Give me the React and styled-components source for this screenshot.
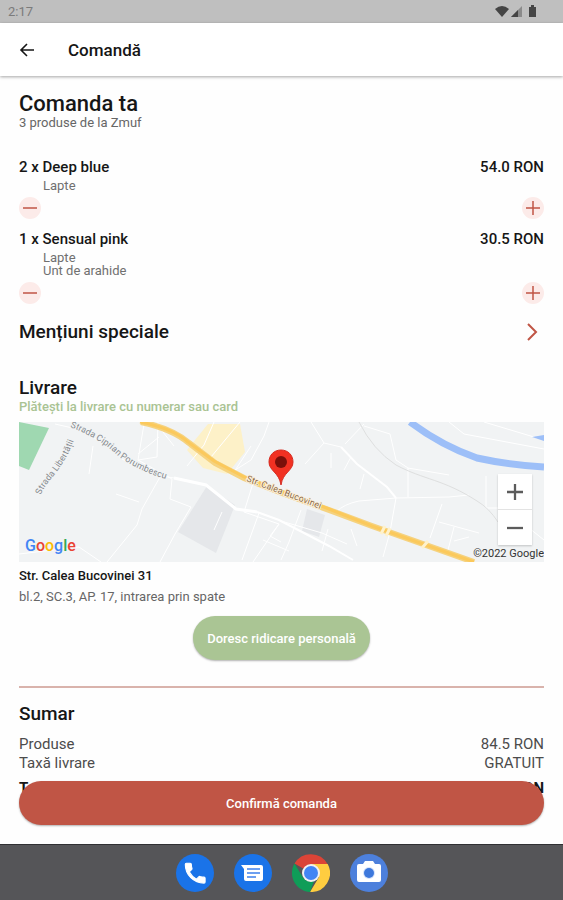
import React from "react";
import styled, { createGlobalStyle } from "styled-components";

const GlobalStyle = createGlobalStyle`
  *, *::before, *::after { box-sizing: border-box; }
  body { margin: 0; background: #fff; }
  h1, h2, h3, p, ul, dl, dd, dt { margin: 0; padding: 0; }
  button { font-family: inherit; border: 0; padding: 0; cursor: pointer; }
`;

const Screen = styled.div`
  display: flex;
  flex-direction: column;
  height: 100vh;
  color: #161616;
  background: #fefefe;
  font-family: Roboto, sans-serif;
`;

const StatusBar = styled.div`
  display: flex;
  align-items: center;
  justify-content: space-between;
  flex: none;
  height: 23px;
  padding: 0 25px 0 8px;
  background: #bfbfbf;
  color: #7b7b7b;
  font-size: 13px;
`;

const StatusIcons = styled.svg`
  width: 43px;
  height: 14px;
`;

const AppBar = styled.header`
  display: flex;
  align-items: center;
  flex: none;
  gap: 33px;
  height: 53px;
  padding: 0 19px;
  background: #fff;
  box-shadow: 0 1px 3px rgba(0, 0, 0, 0.35);
  z-index: 1;
`;

const BackButton = styled.button`
  display: flex;
  width: 16px;
  height: 16px;
  background: none;
  color: #161616;
`;

const AppBarTitle = styled.h1`
  font-size: 17px;
  font-weight: 500;
`;

const Body = styled.div`
  position: relative;
  flex: 1;
  min-height: 0;
`;

const Scroller = styled.main`
  height: 100%;
  overflow-y: auto;
  scrollbar-width: none;
  padding: 16px 19px 64px;
`;

const Title = styled.h2`
  font-size: 22px;
  font-weight: 500;
  line-height: 24px;
`;

const Heading = styled.h2`
  font-size: 19px;
  font-weight: 500;
  line-height: 24px;
`;

const Caption = styled.p`
  font-size: 13px;
  line-height: 14px;
  font-weight: ${(p) => (p.$accent ? 500 : 400)};
  color: ${(p) => (p.$accent ? "#a9c393" : "#666")};
`;

const Items = styled.ul`
  display: flex;
  flex-direction: column;
  gap: 10px;
  margin-top: 27px;
  list-style: none;
`;

const ItemName = styled.div`
  display: flex;
  justify-content: space-between;
  font-size: 15px;
  font-weight: 500;
  line-height: 20px;
`;

const Extras = styled.div`
  margin: 2px 0 5px 24px;
  color: #707070;
  font-size: 13px;
  line-height: 13px;
`;

const Stepper = styled.div`
  display: flex;
  justify-content: space-between;
`;

const RoundButton = styled.button`
  display: flex;
  align-items: center;
  justify-content: center;
  width: 22px;
  height: 22px;
  border-radius: 50%;
  background: #fcebe9;
  color: #c05545;
`;

const NotesButton = styled.button`
  display: flex;
  align-items: center;
  justify-content: space-between;
  width: 100%;
  margin-top: 16px;
  padding-right: 6px;
  background: none;
  color: #161616;
  text-align: left;
  font-size: 19px;
  font-weight: 500;
  line-height: 24px;
`;

const Delivery = styled.section`
  display: flex;
  flex-direction: column;
  margin-top: 32px;
`;

const MapFrame = styled.div`
  position: relative;
  height: 140px;
  margin-top: 8px;
  overflow: hidden;
  background: #f1f3f4;
`;

const MapDrawing = styled.svg`
  display: block;
  width: 100%;
  height: 100%;
`;

const MapLogo = styled.a`
  position: absolute;
  left: 6px;
  bottom: 6px;
  font-size: 16px;
  font-weight: 500;
  line-height: 20px;
  text-decoration: none;
`;

const LogoLetter = styled.span`
  color: ${(p) => p.$color};
`;

const MapCredit = styled.span`
  position: absolute;
  right: 0;
  bottom: 1px;
  color: #333;
  font-size: 11px;
  line-height: 14px;
`;

const MapZoom = styled.div`
  position: absolute;
  right: 12px;
  bottom: 17px;
  display: flex;
  flex-direction: column;
  gap: 1px;
  width: 34px;
  background: #e3e3e3;
  box-shadow: 0 1px 2px rgba(0, 0, 0, 0.2);
`;

const MapZoomButton = styled.button`
  display: flex;
  align-items: center;
  justify-content: center;
  height: 35px;
  background: #fff;
  color: #5c5c5c;
`;

const Address = styled.p`
  margin-top: 6px;
  font-size: 13px;
  font-weight: 500;
  line-height: 16px;
`;

const AddressDetail = styled.p`
  margin-top: 5px;
  color: #666;
  font-size: 13px;
  line-height: 16px;
`;

const PickupButton = styled.button`
  align-self: center;
  height: 44px;
  margin-top: 11px;
  padding: 0 14px;
  border-radius: 22px;
  background: #aac594;
  box-shadow: 0 1px 2px rgba(0, 0, 0, 0.3);
  color: #fff;
  font-size: 13px;
  font-weight: 500;
`;

const Summary = styled.section`
  margin-top: 26px;
  padding-top: 14px;
  border-top: 2px solid #d9b3ac;
`;

const Totals = styled.dl`
  margin-top: 9px;
`;

const TotalRow = styled.div`
  display: flex;
  justify-content: space-between;
  margin-top: ${(p) => (p.$strong ? "6px" : "0")};
  color: ${(p) => (p.$strong ? "#161616" : "#4c4c4c")};
  font-size: 15px;
  font-weight: ${(p) => (p.$strong ? 700 : 400)};
  line-height: 19px;
`;

const ConfirmButton = styled.button`
  position: absolute;
  right: 19px;
  bottom: 19px;
  left: 19px;
  height: 44px;
  border-radius: 22px;
  background: #c05545;
  box-shadow: 0 1px 2px rgba(0, 0, 0, 0.3);
  color: #fff;
  font-size: 13px;
  font-weight: 500;
`;

const Dock = styled.nav`
  display: flex;
  align-items: center;
  justify-content: center;
  flex: none;
  gap: 20px;
  height: 56px;
  border-top: 1px solid #303033;
  background: #555558;
`;

const DockButton = styled.button`
  display: flex;
  background: none;
`;

const items = [
  { name: "2 x Deep blue", price: "54.0 RON", extras: ["Lapte"] },
  { name: "1 x Sensual pink", price: "30.5 RON", extras: ["Lapte", "Unt de arahide"] },
];

const logo = [
  ["G", "#4285f4"],
  ["o", "#ea4335"],
  ["o", "#fbbc05"],
  ["g", "#4285f4"],
  ["l", "#34a853"],
  ["e", "#ea4335"],
];

const Sign = ({ plus, size = 14, weight = 1.5 }) => (
  <svg width={size} height={size} viewBox="0 0 14 14" stroke="currentColor" strokeWidth={weight} aria-hidden="true">
    <path d={plus ? "M0 7H14M7 0V14" : "M0 7H14"} />
  </svg>
);

const StreetMap = () => (
  <MapDrawing viewBox="0 0 525 140" preserveAspectRatio="xMidYMid slice" role="img" aria-label="Hartă">
    <path d="M0 0L30 6L10 48L0 44Z" fill="#9fd8b1" />
    <path d="M189 2H221L226 30L208 52L184 46L168 28Z" fill="#fdf1c8" />
    <path d="M188 64L216 83L209 101L197 131L159 110Z" fill="#e5e7ea" />
    <path d="M288 87L306 93L300 115L283 109Z" fill="#e5e7ea" />
    <g fill="none" stroke="#fff" strokeWidth="2">
      <path d="M36 2L58 7Q86 20 100 35Q125 53 155 56" strokeWidth="1" />
      <path d="M155 56L187 63L217 87L238 90" strokeWidth="3" />
      <path d="M238 90L260 98L310 124L334 138" strokeWidth="2" />
      <path d="M139 0L138 35L119 38M125 2L119 38L153 57L151 77L172 85L156 112L141 140M203 90L195 108M141 55L123 87L118 103L88 140M97 72L120 80M74 24L70 52M0 132L60 125L82 140" strokeWidth="1" />
      <path d="M195 0L185 23L168 44M221 0L192 35M140 15L119 32M140 5L155 24M232 24L215 50M250 0L245 14L232 38L210 52M235 58L225 90L260 102L234 140M240 91L223 138M244 118L270 129M260 102L251 114L262 120" strokeWidth="1" />
      <path d="M292 0L305 21L322 25L338 42L368 65L377 76L430 75L450 73M305 21L286 42M326 22L345 2M377 76L371 110L364 135M377 76L340 79Q325 82 317 90M282 88L270 120L262 138M262 99L303 111L328 122M309 107L303 129M332 107L338 124" strokeWidth="1" />
      <path d="M322 25L338 42L368 65L377 76" strokeWidth="2" />
      <path d="M345 4L371 12L377 38L389 46L430 53M389 46V75M423 82L411 116M420 100L460 111M435 105L429 128M467 54V86H485M430 0L445 12L525 27M465 0L525 18M510 106L525 118M450 115L435 119M312 31V46M332 35L325 48M345 52L341 67" strokeWidth="1" />
    </g>
    <path d="M340 0Q354 28 377 43C405 58 424 57 458 79Q470 86 479 100" fill="none" stroke="#dedfdf" />
    <path d="M391 0Q423 24 458 36Q490 43 525 45" fill="none" stroke="#9dbff8" strokeWidth="7" />
    <path d="M513 15L525 13V19Z" fill="#9dbff8" />
    <path d="M122 0Q154 7 170 21L196 41L225 56L263 71L310 88L353 104L404 122L455 140" fill="none" stroke="#f5d27f" strokeWidth="6" />
    <path d="M121 0Q153 6 169 20L195 39L225 55L310 87L353 104L404 122L455 140" fill="none" stroke="#fbc95c" strokeWidth="3" />
    <path d="M366 104L362 112M371 106L367 114M409 119L403 126" stroke="#fff2cc" strokeWidth="3" />
    <path id="ciprian" d="M51 5Q84 18 100 35Q128 54 160 60" fill="none" />
    <path id="libertatii" d="M22 73C26 58 44 52 58 10" fill="none" />
    <path id="calea" d="M227 59L264 73L320 94" fill="none" />
    <g fill="#85898d" fontSize="10" stroke="#f1f3f4" strokeWidth="2" paintOrder="stroke">
      <text fontSize="9"><textPath href="#ciprian">Strada Ciprian Porumbescu</textPath></text>
      <text fontSize="9"><textPath href="#libertatii">Strada Libertății</textPath></text>
      <text fontSize="9" fill="#8b6846" stroke="#faefda"><textPath href="#calea">Str. Calea Bucovinei</textPath></text>
    </g>
    <path d="M262 28C269 28 274 33 274 40C274 49 264 50 262 63C260 50 250 49 250 40C250 33 255 28 262 28Z" fill="#f13122" stroke="#d62b20" strokeWidth="1" />
    <circle cx="262" cy="40" r="6" fill="#7a100a" />
  </MapDrawing>
);

const apps = [
  {
    name: "Telefon",
    art: (
      <>
        <circle cx="19" cy="19" r="19" fill="#1a73e8" />
        <path transform="translate(6 6) scale(1.1)" d="M6.6 10.8c1.5 2.8 3.8 5.1 6.6 6.6l2.2-2.2c.3-.3.7-.4 1-.2 1.1.4 2.3.6 3.6.6.6 0 1 .4 1 1V20c0 .6-.4 1-1 1C10.600 21 3 13.400 3 4c0-.6.4-1 1-1h3.500c.6 0 1 .4 1 1 0 1.200.2 2.400.6 3.600.1.4 0 .7-.2 1z" fill="#fff" stroke="#fff" />
      </>
    ),
  },
  {
    name: "Mesaje",
    art: (
      <>
        <circle cx="19" cy="19" r="19" fill="#1a73e8" />
        <path d="M7 11H27Q29 11 29 13V25Q29 27 27 27H12Q10 27 10 25V15Z" fill="#fff" />
        <path d="M13 15H26M13 19H26M13 23H22" stroke="#6d9ff0" strokeWidth="2" />
      </>
    ),
  },
  {
    name: "Chrome",
    art: (
      <>
        <path d="M19 19L2.500 9.500A19 19 0 0 1 35.500 10H19Z" fill="#db4437" />
        <path d="M19 10H35.700A19 19 0 0 1 18 38L27 23Z" fill="#ffcd40" />
        <path d="M2.500 9.500L11 23.500Q15 29 22 27L18 38A19 19 0 0 1 2.500 9.500Z" fill="#0f9d58" />
        <circle cx="19" cy="19" r="9" fill="#f1f1f1" />
        <circle cx="19" cy="19" r="7" fill="#4285f4" />
      </>
    ),
  },
  {
    name: "Cameră",
    art: (
      <>
        <circle cx="19" cy="19" r="19" fill="#4d80dc" />
        <path d="M9 10H13L15 7H23L25 10H29Q31 10 31 12V26Q31 28 29 28H9Q7 28 7 26V12Q7 10 9 10Z" fill="#fff" />
        <circle cx="19" cy="19" r="6" fill="#d5e3fb" />
        <circle cx="19" cy="19" r="5" fill="#3d78dc" />
      </>
    ),
  },
];

export default function App() {
  return (
    <Screen>
      <GlobalStyle />
      <StatusBar>
        <span>2:17</span>
        <StatusIcons viewBox="0 0 43 14" aria-hidden="true">
          <path d="M0 4Q7 -2 14 4L7 12Z" fill="#454545" />
          <path d="M16 12L27 1V12Z" fill="#8b8b8b" />
          <path d="M16 12L23 5V12Z" fill="#454545" />
          <path d="M34 2H36V0H39V2H41V12H34Z" fill="#454545" />
        </StatusIcons>
      </StatusBar>
      <AppBar>
        <BackButton aria-label="Înapoi">
          <svg width="16" height="16" viewBox="0 0 16 16" fill="none" stroke="currentColor" strokeWidth="1.6" aria-hidden="true">
            <path d="M15 8H2M8 2L2 8L8 14" />
          </svg>
        </BackButton>
        <AppBarTitle>Comandă</AppBarTitle>
      </AppBar>
      <Body>
        <Scroller>
          <Title>Comanda ta</Title>
          <Caption>3 produse de la Zmuf</Caption>
          <Items>
            {items.map((item) => (
              <li key={item.name}>
                <ItemName>
                  <span>{item.name}</span>
                  <span>{item.price}</span>
                </ItemName>
                <Extras>
                  {item.extras.map((extra) => (
                    <p key={extra}>{extra}</p>
                  ))}
                </Extras>
                <Stepper>
                  <RoundButton aria-label="Scade cantitatea">
                    <Sign />
                  </RoundButton>
                  <RoundButton aria-label="Crește cantitatea">
                    <Sign plus />
                  </RoundButton>
                </Stepper>
              </li>
            ))}
          </Items>
          <NotesButton>
            Mențiuni speciale
            <svg width="11" height="20" viewBox="0 0 11 20" fill="none" stroke="#c05545" strokeWidth="2" aria-hidden="true">
              <path d="M1 2L9 10L1 18" />
            </svg>
          </NotesButton>
          <Delivery>
            <Heading>Livrare</Heading>
            <Caption $accent>Plătești la livrare cu numerar sau card</Caption>
            <MapFrame>
              <StreetMap />
              <MapLogo href="#harta" aria-label="Google">
                {logo.map(([letter, color], i) => (
                  <LogoLetter key={i} $color={color}>{letter}</LogoLetter>
                ))}
              </MapLogo>
              <MapCredit>©2022 Google</MapCredit>
              <MapZoom>
                <MapZoomButton aria-label="Mărește">
                  <Sign plus size={16} weight={2} />
                </MapZoomButton>
                <MapZoomButton aria-label="Micșorează">
                  <Sign size={16} weight={2} />
                </MapZoomButton>
              </MapZoom>
            </MapFrame>
            <Address>Str. Calea Bucovinei 31</Address>
            <AddressDetail>bl.2, SC.3, AP. 17, intrarea prin spate</AddressDetail>
            <PickupButton>Doresc ridicare personală</PickupButton>
          </Delivery>
          <Summary>
            <Heading>Sumar</Heading>
            <Totals>
              <TotalRow>
                <dt>Produse</dt>
                <dd>84.5 RON</dd>
              </TotalRow>
              <TotalRow>
                <dt>Taxă livrare</dt>
                <dd>GRATUIT</dd>
              </TotalRow>
              <TotalRow $strong>
                <dt>Total</dt>
                <dd>84.5 RON</dd>
              </TotalRow>
            </Totals>
          </Summary>
        </Scroller>
        <ConfirmButton>Confirmă comanda</ConfirmButton>
      </Body>
      <Dock aria-label="Aplicații">
        {apps.map((app) => (
          <DockButton key={app.name} aria-label={app.name}>
            <svg width="38" height="38" viewBox="0 0 38 38" aria-hidden="true">
              {app.art}
            </svg>
          </DockButton>
        ))}
      </Dock>
    </Screen>
  );
}
